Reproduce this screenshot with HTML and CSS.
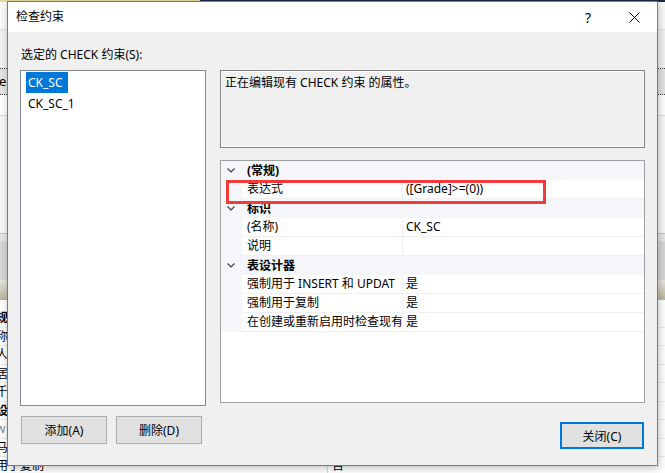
FILE: index.html
```html
<!DOCTYPE html>
<html lang="zh-CN">
<head>
<meta charset="UTF-8">
<meta name="viewport" content="width=device-width, initial-scale=1.0">
<title>检查约束</title>
<link rel="stylesheet" href="styles.css">
</head>
<body>
<!-- the app window behind the dialog, only its edges show -->
<div class="app">
    <div class="app-top"></div>
    <div class="app-head"></div>
    <div class="app-tabs"></div>
    <div class="app-cell">e</div>
    <div class="app-blank"></div>
    <div class="app-blank2"></div>
    <div class="app-toolbar"></div>
    <div class="app-band"></div>
    <div class="app-rows">
        <div class="app-gap"></div>
        <div class="app-row bold">规</div>
        <div class="app-row">称</div>
        <div class="app-row">人</div>
        <div class="app-row">居</div>
        <div class="app-row">千</div>
        <div class="app-row bold">设</div>
        <div class="app-row grey">w</div>
        <div class="app-row">马</div>
        <div class="app-row last"><span class="app-key">用于复制</span><span class="app-val">否</span></div>
    </div>
</div>

<div class="dialog">
    <div class="titlebar">
        <span class="title">检查约束</span>
        <span class="tb-btn help">?</span>
        <span class="tb-btn">
            <svg width="11" height="11" viewBox="0 0 11 11"><path d="M0.5 0.5L10.5 10.5M10.5 0.5L0.5 10.5" stroke="#000" stroke-width="1" fill="none"/></svg>
        </span>
    </div>

    <div class="dlg-body">
        <div class="sel-label">选定的 CHECK 约束(S):</div>
        <div class="panes">
            <div class="left-pane">
                <div class="list">
                    <div class="item"><span class="selected">CK_SC</span></div>
                    <div class="item"><span>CK_SC_1</span></div>
                </div>
                <div class="btns">
                    <button class="btn">添加(A)</button>
                    <button class="btn">删除(D)</button>
                </div>
            </div>

            <div class="right-pane">
                <div class="desc">正在编辑现有 CHECK 约束 的属性。</div>

                <div class="props">
                    <div class="cat">
                        <span class="caret"><svg width="8" height="5" viewBox="0 0 8 5"><path d="M0.5 0.5L4 4L7.5 0.5" stroke="#404040" stroke-width="1.2" fill="none"/></svg></span>
                        <span class="cat-name">(常规)</span>
                    </div>
                    <div class="prop">
                        <span class="gutter"></span>
                        <span class="pname">表达式</span>
                        <span class="pval">([Grade]&gt;=(0))</span>
                    </div>
                    <div class="cat">
                        <span class="caret"><svg width="8" height="5" viewBox="0 0 8 5"><path d="M0.5 0.5L4 4L7.5 0.5" stroke="#404040" stroke-width="1.2" fill="none"/></svg></span>
                        <span class="cat-name">标识</span>
                    </div>
                    <div class="prop">
                        <span class="gutter"></span>
                        <span class="pname">(名称)</span>
                        <span class="pval">CK_SC</span>
                    </div>
                    <div class="prop">
                        <span class="gutter"></span>
                        <span class="pname">说明</span>
                        <span class="pval"></span>
                    </div>
                    <div class="cat">
                        <span class="caret"><svg width="8" height="5" viewBox="0 0 8 5"><path d="M0.5 0.5L4 4L7.5 0.5" stroke="#404040" stroke-width="1.2" fill="none"/></svg></span>
                        <span class="cat-name">表设计器</span>
                    </div>
                    <div class="prop">
                        <span class="gutter"></span>
                        <span class="pname">强制用于 INSERT 和 UPDAT</span>
                        <span class="pval">是</span>
                    </div>
                    <div class="prop">
                        <span class="gutter"></span>
                        <span class="pname">强制用于复制</span>
                        <span class="pval">是</span>
                    </div>
                    <div class="prop">
                        <span class="gutter"></span>
                        <span class="pname">在创建或重新启用时检查现有</span>
                        <span class="pval">是</span>
                    </div>

                    <!-- red annotation box drawn over the expression row -->
                    <div class="mark"></div>
                </div>

                <div class="foot">
                    <button class="btn close-btn">关闭(C)</button>
                </div>
            </div>
        </div>
    </div>
</div>
</body>
</html>
```

FILE: styles.css
```css
body {
    margin: 0;
    width: 665px;
    height: 473px;
    overflow: hidden;
    position: relative;
    background: #ffffff;
    font-family: "Segoe UI", "Noto Sans", "Noto Sans CJK SC", sans-serif;
    font-size: 12px;
    color: #000000;
}

/* background window */
.app-top {
    height: 2px;
    background: linear-gradient(to right, #e8dc9c 0, #e8dc9c 200px, #1e2b47 200px);
}
.app-head {
    height: 28px;
    box-sizing: border-box;
    background: #fbfbfb;
    border-bottom: 1px solid #e0e0e0;
}
.app-tabs {
    height: 38px;
    background: #f3f3f3;
}
.app-cell {
    height: 27px;
    box-sizing: border-box;
    background: #e4e4e4;
    border-top: 1px dotted #444444;
    border-bottom: 1px dotted #444444;
    line-height: 25px;
    font-size: 13px;
    text-indent: -1px;
}
.app-blank {
    height: 20px;
    background: #ffffff;
}
.app-blank2 {
    height: 118px;
    box-sizing: border-box;
    border-top: 1px solid #dcdcdc;
    background: #f7f7f7;
}
.app-toolbar {
    height: 47px;
    box-sizing: border-box;
    background: linear-gradient(#e6e6e6 0, #e6e6e6 7px, #d6d6d6 8px, #d6d6d6);
    border-top: 1px solid #c4c4c4;
}
.app-band {
    height: 20px;
    background: linear-gradient(#e8e6dc, #b9b59f);
}
.app-gap {
    height: 9px;
}
.app-row {
    height: 18.5px;
    box-sizing: border-box;
    line-height: 18px;
    text-indent: -4px;
    border-bottom: 1px solid #ececec;
    white-space: nowrap;
    display: flex;
}
.app-row.bold {
    font-weight: bold;
}
.app-row.grey {
    color: #8a8a8a;
}
.app-key {
    width: 327px;
}
.app-val {
    border-left: 1px solid #dcdcdc;
    padding-left: 4px;
    text-indent: 0;
}

/* dialog window */
.dialog {
    position: absolute;
    left: 7px;
    top: 1px;
    width: 651px;
    height: 465px;
    box-sizing: border-box;
    border: 1px solid #7a7a7a;
    background: #f0f0f0;
    box-shadow: 1px 2px 8px rgba(0, 0, 0, 0.25);
    display: flex;
    flex-direction: column;
}
.titlebar {
    height: 30px;
    background: #ffffff;
    display: flex;
    align-items: center;
}
.title {
    flex: 1;
    padding-left: 8px;
    line-height: 30px;
}
.tb-btn {
    width: 46px;
    height: 30px;
    display: flex;
    align-items: center;
    justify-content: center;
}
.tb-btn.help {
    font-size: 14px;
}

.dlg-body {
    padding: 15px 11px 0 12px;
}
.sel-label {
    height: 16px;
    line-height: 16px;
    margin: 0 0 7px 1px;
}
.panes {
    display: grid;
    grid-template-columns: 186px 425px;
    column-gap: 14px;
}
.left-pane, .right-pane {
    display: flex;
    flex-direction: column;
}

.list {
    height: 336px;
    box-sizing: border-box;
    border: 1px solid #828790;
    background: #ffffff;
    padding: 1px 5px;
}
.item {
    height: 21px;
    line-height: 21px;
}
.item span {
    display: inline-block;
    padding: 0 5px 0 2px;
}
.item .selected {
    background: #0078d7;
    color: #ffffff;
}

.btns {
    margin-top: 10px;
    padding-left: 1px;
    display: flex;
    gap: 9px;
}
.btn {
    width: 86px;
    height: 28px;
    box-sizing: border-box;
    border: 1px solid #adadad;
    background: #e1e1e1;
    font-family: inherit;
    font-size: 12px;
    color: #000000;
    padding: 0;
}

.desc {
    height: 78px;
    box-sizing: border-box;
    border: 1px solid #828282;
    box-shadow: inset 0 0 0 1px #fcfcfc;
    padding: 4px 4px;
    line-height: 16px;
}

.props {
    position: relative;
    margin-top: 12px;
    height: 243px;
    box-sizing: border-box;
    border: 1px solid #a0a0a0;
    background: #ffffff;
}
.cat {
    height: 19px;
    display: flex;
    align-items: center;
    background: #f4f6fa;
}
.caret {
    width: 21px;
    box-sizing: border-box;
    padding-left: 6px;
    display: flex;
}
.cat-name {
    font-weight: bold;
    padding-left: 5px;
    line-height: 19px;
}
.prop {
    height: 19px;
    display: flex;
    line-height: 18px;
}
.gutter {
    width: 21px;
    background: #f4f6fa;
}
.pname {
    width: 160px;
    box-sizing: border-box;
    padding-left: 5px;
    border-bottom: 1px solid #f0f0f0;
    white-space: nowrap;
    overflow: hidden;
}
.pval {
    flex: 1;
    padding-left: 3px;
    border-left: 1px solid #f0f0f0;
    border-bottom: 1px solid #f0f0f0;
    white-space: nowrap;
}
.mark {
    position: absolute;
    left: 5px;
    top: 19px;
    width: 320px;
    height: 24px;
    box-sizing: border-box;
    border: 3px solid #f33b3b;
}

.foot {
    margin-top: 19px;
    padding-right: 1px;
    display: flex;
    justify-content: flex-end;
}
.close-btn {
    width: 84px;
    height: 27px;
    border: 2px solid #0078d7;
}
```
